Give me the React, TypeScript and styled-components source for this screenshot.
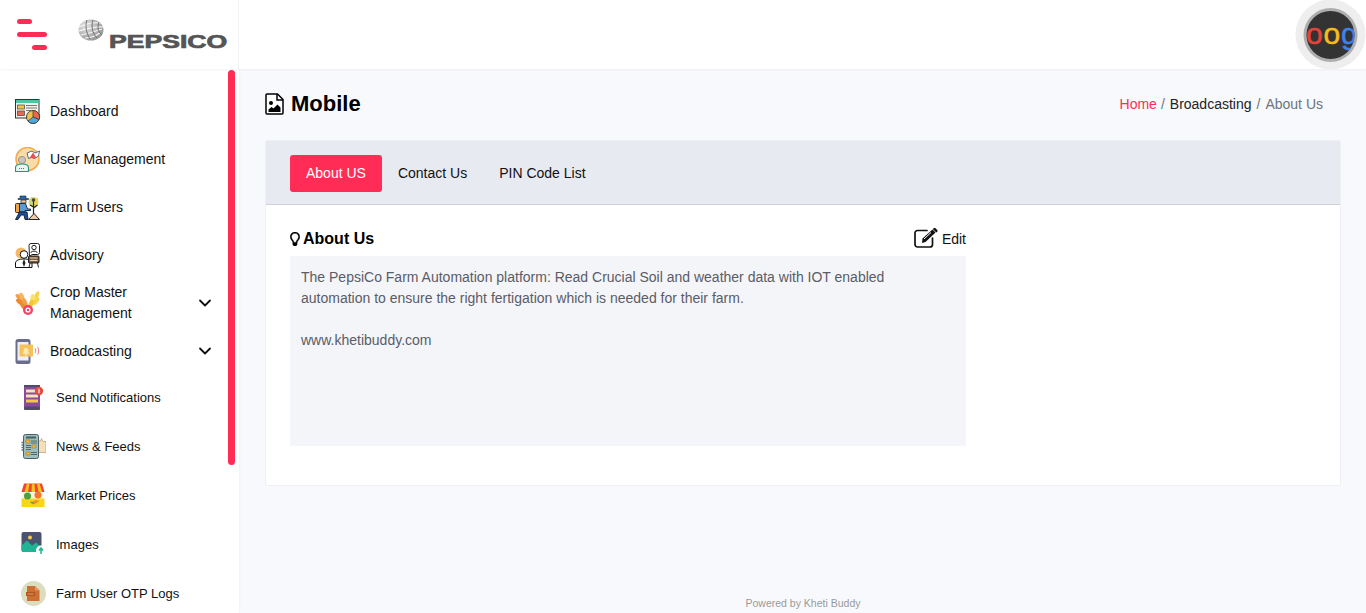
import React from 'react';
import styled, { createGlobalStyle } from 'styled-components';

const GlobalStyle = createGlobalStyle`
  html, body {
    margin: 0;
    padding: 0;
    height: 100%;
    overflow: hidden;
    background: #f8f9fc;
    font-family: 'Liberation Sans', Arial, sans-serif;
    color: #000;
  }
`;

const Page = styled.div`
  width: 1366px;
  height: 613px;
  overflow: hidden;
  display: flex;
  flex-direction: column;
`;

const Header = styled.header`
  height: 69px;
  flex-shrink: 0;
  display: flex;
  background: #fff;
  box-shadow: 0 1px 2px rgba(0, 0, 0, 0.05);
  position: relative;
  z-index: 2;
`;

const Brand = styled.div`
  width: 239px;
  flex-shrink: 0;
  display: flex;
  align-items: center;
  padding-left: 17px;
  box-sizing: border-box;
  border-right: 1px solid #f1f1f4;
`;

const Burger = styled.div`
  width: 30px;
  display: flex;
  flex-direction: column;
  gap: 8px;
  margin-top: -1px;
`;

const BurgerBar = styled.span<{ $width: number; $right?: boolean }>`
  display: block;
  height: 5px;
  width: ${p => p.$width}px;
  border-radius: 3px;
  background: #ff2d55;
  align-self: ${p => (p.$right ? 'flex-end' : 'flex-start')};
`;

const Logo = styled.div`
  margin-left: 31px;
  height: 34px;
  position: relative;
  width: 150px;
`;

const LogoGlobe = styled.svg`
  position: absolute;
  left: 0;
  top: 1px;
`;

const LogoWord = styled.span`
  position: absolute;
  left: 31px;
  bottom: 3px;
  font-size: 17.5px;
  line-height: 14px;
  font-weight: 700;
  color: #555;
  -webkit-text-stroke: 0.7px #555;
  transform: scaleX(1.52);
  transform-origin: left center;
  white-space: nowrap;
`;

const TopRight = styled.div`
  flex: 1;
  display: flex;
  justify-content: flex-end;
`;

const Avatar = styled.div`
  width: 71px;
  height: 69px;
  overflow: hidden;
`;

const Body = styled.div`
  flex: 1;
  display: flex;
  min-height: 0;
`;

const Sidebar = styled.aside`
  width: 239px;
  flex-shrink: 0;
  background: #fff;
  position: relative;
  overflow: hidden;
  padding-top: 18px;
  box-sizing: border-box;
  box-shadow: 1px 0 2px rgba(0, 0, 0, 0.03);
`;

const ScrollThumb = styled.div`
  position: absolute;
  top: 1px;
  left: 228px;
  width: 7px;
  height: 395px;
  border-radius: 4px;
  background: #ff2d55;
`;

const MenuRow = styled.div<{ $sub?: boolean }>`
  display: flex;
  align-items: center;
  height: ${p => (p.$sub ? 49 : 48)}px;
  padding-left: ${p => (p.$sub ? 21 : 15)}px;
  font-size: ${p => (p.$sub ? 13 : 14)}px;
  line-height: 21px;
  color: #111;
`;

const SubMenu = styled.div`
  margin-top: -2px;
`;

const IconSlot = styled.span`
  width: 25px;
  height: 25px;
  flex-shrink: 0;
  margin-right: 10px;
  display: block;
  svg {
    display: block;
  }
`;

const MenuLabel = styled.span`
  flex: 1;
`;

const Caret = styled.svg`
  width: 14px;
  height: 14px;
  margin-right: 27px;
  flex-shrink: 0;
`;

const Main = styled.main`
  flex: 1;
  min-width: 0;
  display: flex;
  flex-direction: column;
  padding: 0 25px 0 26px;
`;

const TitleRow = styled.div`
  height: 71px;
  flex-shrink: 0;
  display: flex;
  align-items: center;
  justify-content: space-between;
`;

const PageTitle = styled.h1`
  margin: -2px 0 0;
  display: flex;
  align-items: center;
  gap: 7px;
  font-size: 22px;
  font-weight: 700;
  line-height: 26px;
  color: #000;
`;

const Crumbs = styled.div`
  display: flex;
  gap: 5px;
  font-size: 14px;
  margin-right: 18px;
  margin-top: -1px;
  color: #6c757d;
`;

const Crumb = styled.span<{ $tone: string }>`
  color: ${p => p.$tone};
  &:first-child {
    margin-right: -1px;
  }
`;

const Card = styled.section`
  background: #fff;
  border: 1px solid #eff0f4;
  border-radius: 2px;
  height: 346px;
  box-sizing: border-box;
`;

const TabBar = styled.nav`
  height: 64px;
  box-sizing: border-box;
  padding: 14px 24px 0;
  background: #e8eaf2;
  border-bottom: 1px solid #ced1d9;
  display: flex;
  align-items: flex-start;
`;

const Tab = styled.div<{ $active?: boolean }>`
  height: 37px;
  box-sizing: border-box;
  padding: 0 16px 1px;
  display: flex;
  align-items: center;
  font-size: 14px;
  border-radius: 3px;
  color: ${p => (p.$active ? '#fff' : '#111')};
  background: ${p => (p.$active ? '#ff2d55' : 'transparent')};
`;

const CardBody = styled.div`
  width: 676px;
  margin-left: 24px;
  padding-top: 22px;
`;

const SectionHead = styled.div`
  height: 24px;
  margin-bottom: 5px;
  display: flex;
  align-items: center;
  justify-content: space-between;
`;

const SectionTitle = styled.h2`
  margin: 0;
  display: flex;
  align-items: center;
  gap: 3px;
  font-size: 16px;
  font-weight: 700;
  color: #000;
`;

const EditLink = styled.div`
  display: flex;
  align-items: center;
  gap: 4px;
  font-size: 14px;
  color: #111;
  svg {
    margin-top: -3px;
  }
`;

const AboutBox = styled.div`
  height: 190px;
  box-sizing: border-box;
  background: #f4f5f9;
  padding: 11px 11px;
  font-size: 14px;
  line-height: 21px;
  color: #5a5c66;
`;

const Footer = styled.footer`
  margin-top: auto;
  height: 20px;
  text-align: center;
  font-size: 10.5px;
  line-height: 20px;
  color: #999;
`;

const DashboardIcon = () => (
  <svg width="25" height="25" viewBox="0 0 25 25">
    <rect x="0.5" y="0.5" width="23.5" height="18.5" fill="#f3f1e9" stroke="#333" />
    <rect x="1" y="1" width="22.5" height="3" fill="#4cc7a5" />
    <rect x="2.5" y="6" width="7" height="4" fill="#f2c14e" stroke="#444" strokeWidth="0.7" />
    <rect x="2.5" y="12" width="7" height="4.5" fill="#e8694f" stroke="#444" strokeWidth="0.7" />
    <path d="M11 6.5h11M11 9h11M11 11.500h5" stroke="#777" strokeWidth="1" />
    <circle cx="18" cy="18" r="6.500" fill="#f2c14e" stroke="#333" strokeWidth="0.9" />
    <path d="M18 18V11.500a6.500 6.500 0 0 1 6 9z" fill="#e8694f" stroke="#333" strokeWidth="0.7" />
    <path d="M18 18l6 2.500a6.500 6.500 0 0 1-11 1.500z" fill="#4ea9d8" stroke="#333" strokeWidth="0.7" />
  </svg>
);

const UserMgmtIcon = () => (
  <svg width="25" height="25" viewBox="0 0 25 25">
    <circle cx="12.500" cy="12" r="11.500" fill="#fbdca8" stroke="#f2ab4d" strokeWidth="1.600" />
    <circle cx="7" cy="13" r="3.600" fill="#c9c6bb" stroke="#8a8a80" strokeWidth="0.8" />
    <path d="M0.500 24.500v-4c0-2.500 2.500-3.500 6.500-3.500s6.500 1 6.500 3.500v4z" fill="#e8f5f1" stroke="#2e8f80" strokeWidth="1.100" />
    <path d="M4 21.500h6" stroke="#2e8f80" strokeWidth="1" strokeDasharray="1 1" />
    <path d="M12 6l5-2 3 2 4.500-2-1 5-4 2.500-3-1-3 1z" fill="#fff" stroke="#4a5a6a" strokeWidth="0.9" />
    <path d="M14.500 11l3.500-5.500 3.500 5.500z" fill="#ee4b55" />
  </svg>
);

const FarmUsersIcon = () => (
  <svg width="25" height="25" viewBox="0 0 25 25">
    <circle cx="18.500" cy="7" r="5" fill="#c9dc7a" />
    <rect x="19" y="3" width="4" height="7" fill="#f3d24f" />
    <path d="M13.500 24.500l5.500-6 5.500 6z" fill="#eec9a8" stroke="#222" strokeWidth="1" />
    <path d="M18.500 19V6M18.500 13l4-3M18.500 12l-3.500-2" stroke="#222" strokeWidth="1.200" fill="none" />
    <circle cx="18.500" cy="5" r="1.800" fill="#444" />
    <path d="M5 3.500V1h6v2.500h2.500v1H3v-1z" fill="#2a67b0" stroke="#123" strokeWidth="0.6" />
    <rect x="6" y="5" width="5" height="3" fill="#f3c9a0" stroke="#222" strokeWidth="0.7" />
    <rect x="0.500" y="8.500" width="5" height="9" rx="1" fill="#eea548" stroke="#222" strokeWidth="0.9" />
    <path d="M4.500 8.500h6l2 5.500h3v1.500H10V17H4.500z" fill="#5a9bd8" stroke="#123" strokeWidth="0.9" />
    <path d="M4.500 17H12l1 7.500h-3l-1-4.500H6l-3 4.500H0.500z" fill="#1f4f93" stroke="#0c1c33" strokeWidth="0.9" />
  </svg>
);

const AdvisoryIcon = () => (
  <svg width="25" height="25" viewBox="0 0 25 25">
    <circle cx="6" cy="10" r="5.500" fill="#f6b866" />
    <path d="M14 2.500a2 2 0 0 1 2-2h6.500a2 2 0 0 1 2 2v7a2 2 0 0 1-2 2H17l-2.500 2z" fill="#fff" stroke="#222" strokeWidth="1" />
    <circle cx="19" cy="4.500" r="2.200" fill="#fff" stroke="#222" strokeWidth="1" />
    <path d="M15.800 10c0-2.500 6.400-2.500 6.400 0" fill="none" stroke="#222" strokeWidth="1" />
    <circle cx="9" cy="11.500" r="3.800" fill="#fff" stroke="#111" strokeWidth="1" />
    <path d="M0.500 24.500v-4.500c0-2.500 3.500-4 8.500-4s8 1.500 8 4v4.500z" fill="#fff" stroke="#111" strokeWidth="1" />
    <path d="M9 16l-1.500 4 1.500 4 1.500-4z" fill="#222" />
    <rect x="13.500" y="13" width="10.500" height="7" rx="1" fill="#7a5a3c" stroke="#111" strokeWidth="0.9" />
    <path d="M15 15h7.500M15 17.500h7.500" stroke="#f2e6cf" strokeWidth="0.9" />
    <path d="M15 20l-1 4.500M22.500 20l1 4.500" stroke="#111" strokeWidth="0.9" />
  </svg>
);

const CropIcon = () => (
  <svg width="25" height="25" viewBox="0 0 25 25">
    <g fill="#f0a04b">
      <ellipse cx="4" cy="6" rx="4" ry="2" transform="rotate(35 4 6)" />
      <ellipse cx="7" cy="6" rx="4.500" ry="2.200" transform="rotate(70 7 6)" fill="#f6b55c" />
      <ellipse cx="5" cy="11" rx="4.500" ry="2.300" transform="rotate(35 5 11)" fill="#ea8a33" />
      <ellipse cx="10" cy="12" rx="5" ry="2.300" transform="rotate(70 10 12)" />
      <ellipse cx="9" cy="16" rx="4.500" ry="2.200" transform="rotate(45 9 16)" fill="#ea8a33" />
    </g>
    <g fill="#f7d44c">
      <ellipse cx="22" cy="4" rx="4" ry="2" transform="rotate(-70 22 4)" />
      <ellipse cx="17.500" cy="7.500" rx="4.500" ry="2.200" transform="rotate(-80 17.500 7.500)" fill="#fbe06a" />
      <ellipse cx="21" cy="10" rx="4.500" ry="2.300" transform="rotate(-50 21 10)" />
      <ellipse cx="16" cy="13" rx="4.500" ry="2.300" transform="rotate(-70 16 13)" fill="#f2c733" />
    </g>
    <circle cx="13" cy="19" r="5" fill="#f0446a" />
    <circle cx="13" cy="19" r="2.600" fill="#fff" />
    <circle cx="13" cy="19" r="1.200" fill="#f0446a" />
  </svg>
);

const BroadcastIcon = () => (
  <svg width="25" height="25" viewBox="0 0 25 25">
    <rect x="0.500" y="0" width="15" height="25" rx="2.500" fill="#6a6d8c" />
    <rect x="2.500" y="3" width="11" height="18.500" fill="#eef0f5" />
    <rect x="4.500" y="5.500" width="13.500" height="12" rx="1" fill="#f5c15a" />
    <path d="M7.500 15c1-1 1-2.500 1.200-4.500a2.400 2.400 0 0 1 4.600 0c.2 2 .2 3.500 1.200 4.500z" fill="#fbe7b2" />
    <circle cx="11" cy="15.800" r="1" fill="#fbe7b2" />
    <path d="M20 9.500c1 1 1 3.500 0 4.500M22.500 8c1.500 2 1.500 5.500 0 7.500" fill="none" stroke="#ee8d9b" strokeWidth="1.100" />
  </svg>
);

const NotificationIcon = () => (
  <svg width="25" height="25" viewBox="0 0 25 25">
    <rect x="3" y="0" width="16" height="25" rx="1.500" fill="#8c4a9e" />
    <rect x="3" y="21.500" width="16" height="3.500" rx="1.500" fill="#4c4f62" />
    <rect x="3" y="0" width="16" height="2" fill="#4c4f62" />
    <rect x="5" y="4.500" width="10" height="3" fill="#f4e4b8" />
    <rect x="5" y="9.500" width="12" height="3" fill="#f4e4b8" />
    <rect x="5" y="14.500" width="12" height="3" fill="#f2c94c" />
    <circle cx="18" cy="6" r="4.200" fill="#e74c3c" />
    <path d="M18 3.800v4.400" stroke="#fff" strokeWidth="1.100" />
  </svg>
);

const NewsIcon = () => (
  <svg width="25" height="25" viewBox="0 0 25 25">
    <path d="M17 7h2.500l1-2.500 1.500 3h3v11h-8z" fill="#f4dfba" stroke="#b99a6c" strokeWidth="0.7" />
    <rect x="2.500" y="0.500" width="15" height="24" rx="2" fill="#9fbdba" stroke="#466064" strokeWidth="1" />
    <rect x="5" y="2.500" width="10" height="2" fill="#466064" />
    <rect x="5" y="6" width="4" height="3" fill="#f2b632" stroke="#7a6a30" strokeWidth="0.4" />
    <path d="M10 7h6M10 9h6M5 11.500h5M5 13.500h5M5 15.500h5" stroke="#466064" strokeWidth="0.9" />
    <rect x="11" y="11" width="4" height="3" fill="#f2b632" stroke="#7a6a30" strokeWidth="0.4" />
    <rect x="5" y="18" width="4" height="3" fill="#f2b632" stroke="#7a6a30" strokeWidth="0.4" />
    <path d="M10 18.500h6M10 20.500h6" stroke="#466064" strokeWidth="0.9" />
    <path d="M2.500 8.500H0.500M2.500 11H0.500M2.500 13.500H0.500M2.500 16H0.500" stroke="#5e7274" strokeWidth="1.400" />
  </svg>
);

const MarketIcon = () => (
  <svg width="25" height="25" viewBox="0 0 25 25">
    <rect x="1.500" y="8" width="21" height="9" fill="#f7f1e0" />
    <rect x="0.500" y="15.500" width="23" height="8.500" fill="#fbd616" />
    <path d="M3 0.500h18l2.500 8.500h-23z" fill="#f44336" />
    <path d="M6 0.500h2.500L7 9H3.500zM11 0.500h2.500L14 9h-3.500zM16 0.500h2.500L21 9h-3.500z" fill="#fcc419" />
    <circle cx="6.500" cy="13" r="3.500" fill="#48a23f" />
    <circle cx="17" cy="12" r="3.500" fill="#f2762e" />
    <path d="M9 19.500l6-2.500 3.500 1-5.500 3.500z" fill="#ef8b3a" />
    <path d="M9.500 19l3.500 1.500" stroke="#5bb04d" strokeWidth="1.500" />
  </svg>
);

const ImagesIcon = () => (
  <svg width="25" height="25" viewBox="0 0 25 25">
    <rect x="0.500" y="0" width="20" height="20" rx="2" fill="#4a5370" />
    <circle cx="9" cy="5.500" r="2" fill="#f7c948" />
    <path d="M0.500 18V13.500l5.500-5 5 5 4-3 5.500 5V18a2 2 0 0 1-2 2h-16a2 2 0 0 1-2-2z" fill="#1fb493" />
    <circle cx="20" cy="18.500" r="5" fill="#fff" />
    <path d="M20 22v-6M18 18.500l2-2.500 2 2.500" stroke="#1fb493" strokeWidth="1.500" fill="none" />
  </svg>
);

const OtpIcon = () => (
  <svg width="25" height="25" viewBox="0 0 25 25">
    <circle cx="12.500" cy="12.500" r="12.500" fill="#dcdcbf" />
    <path d="M6 5h8l4.500 4.500V20H6z" fill="#cc6f32" />
    <path d="M14 5l4.500 4.500H14z" fill="#e39a62" />
    <rect x="5" y="11" width="9" height="4" fill="#b5561f" />
    <path d="M6.500 13h6" stroke="#e8b48a" strokeWidth="0.800" />
  </svg>
);

const Chevron = () => (
  <Caret viewBox="0 0 14 14">
    <path d="M2 4.500l5 5 5-5" fill="none" stroke="#111" strokeWidth="1.800" strokeLinecap="round" strokeLinejoin="round" />
  </Caret>
);

const TitleFileIcon = () => (
  <svg width="19" height="22" viewBox="0 0 19 22">
    <path d="M1 2a1 1 0 0 1 1-1h10.500L18 6.500V20a1 1 0 0 1-1 1H2a1 1 0 0 1-1-1z" fill="#fff" stroke="#000" strokeWidth="1.500" />
    <path d="M12 1v6h6" fill="none" stroke="#000" strokeWidth="1.500" />
    <circle cx="6" cy="10" r="2" fill="#000" />
    <path d="M3.500 19v-2.500l3-2.500 2 1.500 4-4 3 3V19z" fill="#000" />
  </svg>
);

const BulbIcon = () => (
  <svg width="10" height="14" viewBox="0 0 352 512">
    <path
      d="M96 454c0 6 2 12 5 18l17 26c5 8 16 14 26 14h62c9 0 20-6 25-14l17-26c3-4 5-12 5-18v-70H96zM176 0C74 0 0 83 0 176c0 44 17 85 44 116 16 19 42 58 52 92h48c0-5-1-10-2-14-6-18-23-64-62-108-21-24-32-55-32-86C48 100 110 48 176 48c71 0 128 57 128 128 0 32-12 62-33 86-39 45-56 90-62 108-1 5-2 9-2 14h48c10-34 36-73 52-92 27-31 45-72 45-116C352 79 273 0 176 0z"
      fill="#000"
      stroke="#000"
      strokeWidth="14"
    />
  </svg>
);

const EditIcon = () => (
  <svg width="24" height="20" viewBox="0 0 24 20">
    <path d="M13 2.500H3.500a2.500 2.500 0 0 0-2.500 2.500v11.500a2.500 2.500 0 0 0 2.500 2.500H16a2.500 2.500 0 0 0 2.500-2.500V10" fill="none" stroke="#111" strokeWidth="1.700" strokeLinecap="round" />
    <path d="M8.500 10.500L18.500 1.500l3 3-10 9.500-3.500 1z" fill="#111" />
    <path d="M18.800 1l.9-.8a1.300 1.300 0 0 1 1.800 0l1.700 1.700a1.300 1.300 0 0 1 0 1.800l-.9.900z" fill="#111" />
    <path d="M10 11l7-6.500" stroke="#fff" strokeWidth="1" />
  </svg>
);

const topMenu = [
  { label: 'Dashboard', icon: <DashboardIcon /> },
  { label: 'User Management', icon: <UserMgmtIcon /> },
  { label: 'Farm Users', icon: <FarmUsersIcon /> },
  { label: 'Advisory', icon: <AdvisoryIcon /> },
  { label: <>Crop Master<br />Management</>, icon: <CropIcon />, caret: true },
  { label: 'Broadcasting', icon: <BroadcastIcon />, caret: true },
];

const subMenu = [
  { label: 'Send Notifications', icon: <NotificationIcon /> },
  { label: 'News & Feeds', icon: <NewsIcon /> },
  { label: 'Market Prices', icon: <MarketIcon /> },
  { label: 'Images', icon: <ImagesIcon /> },
  { label: 'Farm User OTP Logs', icon: <OtpIcon /> },
];

export default function App() {
  return (
    <Page>
      <GlobalStyle />
      <Header>
        <Brand>
          <Burger>
            <BurgerBar $width={15} />
            <BurgerBar $width={30} />
            <BurgerBar $width={15} $right />
          </Burger>
          <Logo>
            <LogoGlobe width="26" height="23" viewBox="0 0 26 23">
              <defs>
                <radialGradient id="globe-shade" cx="0.3" cy="0.3" r="0.9">
                  <stop offset="0" stopColor="#e2e2e2" />
                  <stop offset="1" stopColor="#8a8a8a" />
                </radialGradient>
              </defs>
              <ellipse cx="13" cy="11" rx="12.500" ry="10.500" fill="url(#globe-shade)" />
              <path d="M1 8c6-3 14-5 22-4M1 12c7-2 16-5 24-4M3 16c7-1 15-4 21-6M7 19c6 0 12-3 15-5" fill="none" stroke="#f4f4f4" strokeWidth="1.100" />
              <path d="M9 1c-2 5-1 13 3 19M15 1c-2 6-1 13 4 18M21 3c-2 5-1 10 3 13" fill="none" stroke="#666" strokeWidth="0.900" />
            </LogoGlobe>
            <LogoWord>PEPSICO</LogoWord>
          </Logo>
        </Brand>
        <TopRight>
          <Avatar>
            <svg width="71" height="69" viewBox="0 0 71 69">
              <defs>
                <clipPath id="avatar-clip">
                  <circle cx="35.500" cy="35" r="24" />
                </clipPath>
              </defs>
              <circle cx="35.500" cy="34.500" r="35" fill="#eeeeee" />
              <circle cx="35.500" cy="35" r="27" fill="#aeaeae" />
              <circle cx="35.500" cy="35" r="24" fill="#333" />
              <g clipPath="url(#avatar-clip)" fontFamily="'Liberation Sans', sans-serif" fontSize="30" strokeWidth="0.500">
                <text x="11" y="44" fill="#e8433a" stroke="#e8433a">o</text>
                <text x="28.500" y="44" fill="#f7bc1c" stroke="#f7bc1c">o</text>
                <text x="46" y="44" fill="#3f83ea" stroke="#3f83ea">g</text>
              </g>
            </svg>
          </Avatar>
        </TopRight>
      </Header>
      <Body>
        <Sidebar>
          <ScrollThumb />
          {topMenu.map((item, i) => (
            <MenuRow key={i}>
              <IconSlot>{item.icon}</IconSlot>
              <MenuLabel>{item.label}</MenuLabel>
              {item.caret && <Chevron />}
            </MenuRow>
          ))}
          <SubMenu>
            {subMenu.map(item => (
              <MenuRow key={item.label} $sub>
                <IconSlot>{item.icon}</IconSlot>
                <MenuLabel>{item.label}</MenuLabel>
              </MenuRow>
            ))}
          </SubMenu>
        </Sidebar>
        <Main>
          <TitleRow>
            <PageTitle>
              <TitleFileIcon />
              Mobile
            </PageTitle>
            <Crumbs>
              <Crumb $tone="#ff2d55">Home</Crumb>
              <Crumb $tone="#6c757d">/</Crumb>
              <Crumb $tone="#222">Broadcasting</Crumb>
              <Crumb $tone="#6c757d">/</Crumb>
              <Crumb $tone="#6c757d">About Us</Crumb>
            </Crumbs>
          </TitleRow>
          <Card>
            <TabBar>
              <Tab $active>About US</Tab>
              <Tab>Contact Us</Tab>
              <Tab>PIN Code List</Tab>
            </TabBar>
            <CardBody>
              <SectionHead>
                <SectionTitle>
                  <BulbIcon />
                  About Us
                </SectionTitle>
                <EditLink>
                  <EditIcon />
                  Edit
                </EditLink>
              </SectionHead>
              <AboutBox>
                The PepsiCo Farm Automation platform: Read Crucial Soil and weather data with IOT enabled automation to ensure the right fertigation which is needed for their farm.
                <br />
                <br />
                www.khetibuddy.com
              </AboutBox>
            </CardBody>
          </Card>
          <Footer>Powered by Kheti Buddy</Footer>
        </Main>
      </Body>
    </Page>
  );
}
